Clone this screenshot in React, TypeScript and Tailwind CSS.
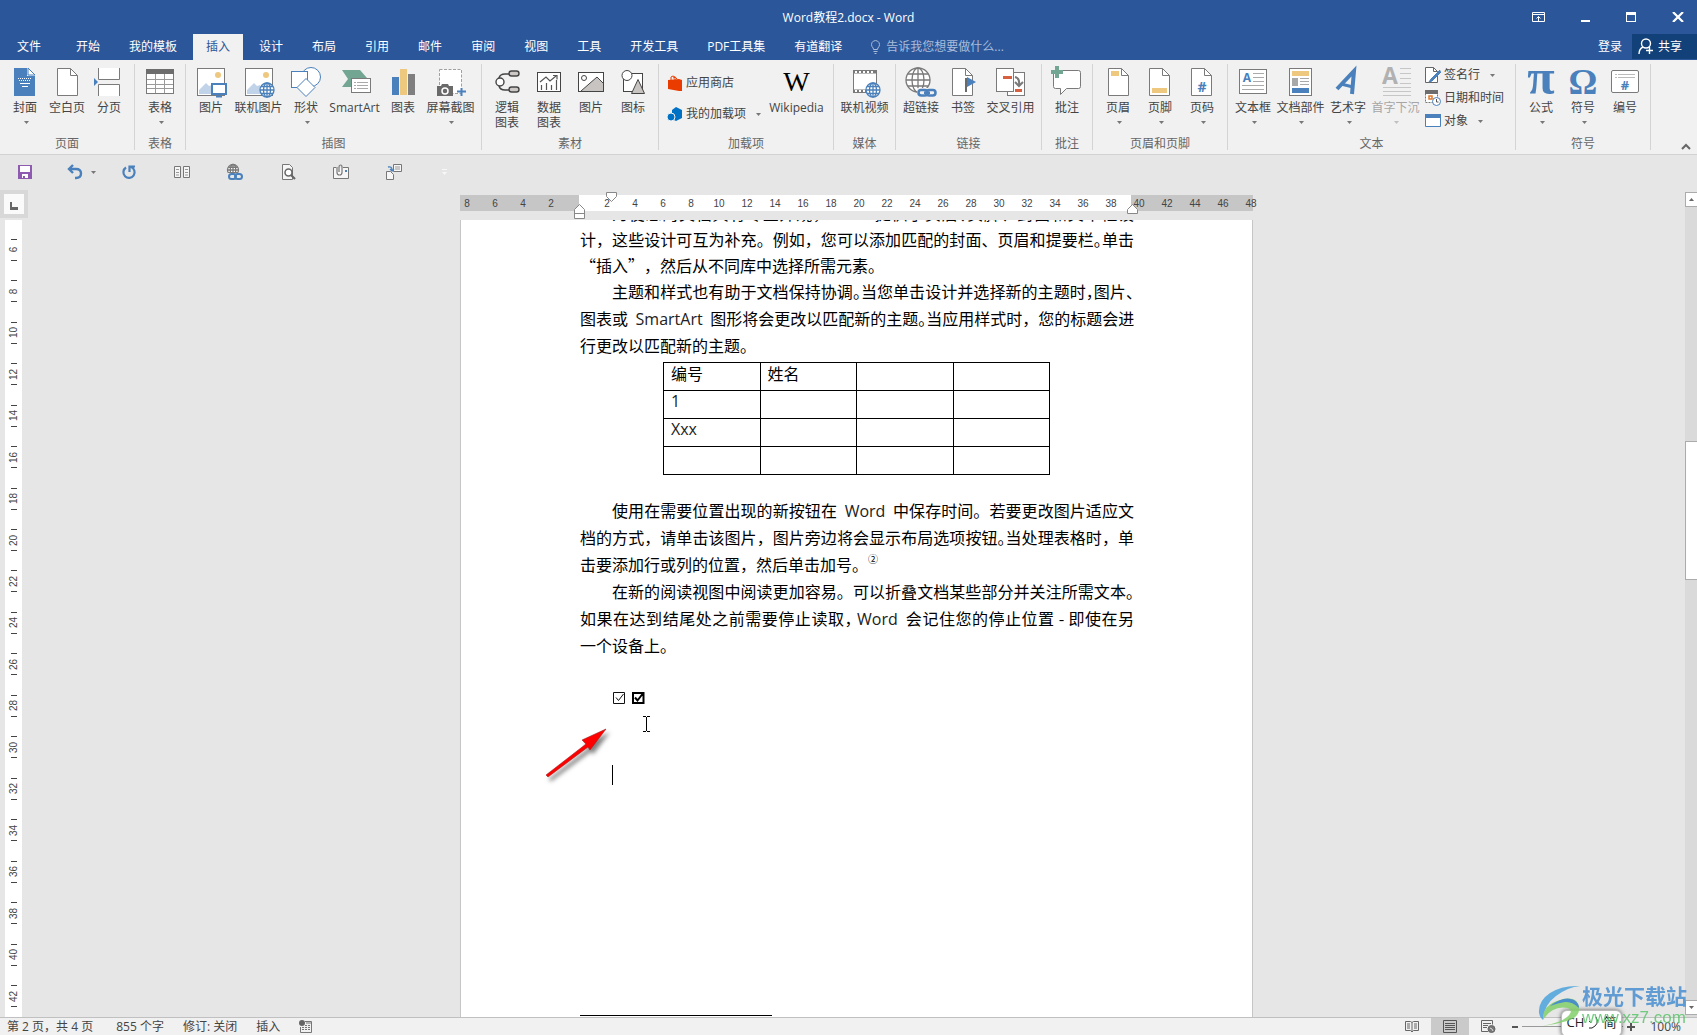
import type { ReactNode } from "react"

type RibbonItem = {
    label: string
    icon: ReactNode
    wide?: string
    menu?: boolean
    disabled?: boolean
}

const BLUE = "#4a80bb"
const GREY = "#7a7a7a"
const YELLOW = "#edc87e"
const GREEN = "#72a693"
const RED = "#d6603f"

const Caret = ({ className = "" }: { className?: string }) => (
    <svg width="5" height="3" viewBox="0 0 5 3" className={className} aria-hidden="true">
        <path d="M0 0h5L2.500 3z" fill="currentColor" />
    </svg>
)

const Icon = ({ children, size = 32 }: { children: ReactNode, size?: number }) => (
    <svg width={size} height={size} viewBox={`0 0 ${size} ${size}`} fill="none" aria-hidden="true" className="shrink-0 overflow-visible">
        {children}
    </svg>
)

// Blank sheet with a folded corner, shared by several ribbon icons
const Sheet = ({ x = 5 }: { x?: number }) => (
    <g stroke={GREY} transform={`translate(${x} 2)`}>
        <path d="M.5.5h13l7 7v20H.5z" fill="#fff" />
        <path d="M13.500.5v7h7" />
    </g>
)

const Globe = ({ cx, cy, r, color }: { cx: number, cy: number, r: number, color: string }) => (
    <g stroke={color} strokeWidth="1.300">
        <circle cx={cx} cy={cy} r={r} fill="#fff" />
        <ellipse cx={cx} cy={cy} rx={r * 0.5} ry={r} />
        <path d={`M${cx - r} ${cy}h${r * 2}M${cx} ${cy - r}v${r * 2}M${cx - r * 0.85} ${cy - r * 0.5}h${r * 1.7}M${cx - r * 0.85} ${cy + r * 0.5}h${r * 1.7}`} />
    </g>
)

const Picture = () => (
    <>
        <rect x="2.500" y="2.500" width="27" height="27" fill="#fff" stroke={GREY} />
        <circle cx="23" cy="9" r="3" fill={YELLOW} />
        <path d="M4 28V24l7-7 3 3 3-1v9z" fill="#c0d3e8" />
    </>
)

const Chain = ({ x, y }: { x: number, y: number }) => (
    <g transform={`translate(${x} ${y})`} stroke={BLUE} strokeWidth="2.600">
        <rect x="1.500" y="2" width="9" height="5.500" rx="2.700" />
        <rect x="9.500" y="2" width="9" height="5.500" rx="2.700" />
        <path d="M7 4.700h6" />
    </g>
)

const coverIcon = (
    <Icon>
        <path d="M5 2h13v8h8v20H5z" fill={BLUE} />
        <path d="M19 2l7 7h-7z" fill="#fff" stroke={BLUE} />
        <path d="M9 12.500h13M10 14.500h12" stroke="#fff" strokeDasharray="1 1" />
        <path d="M11 17.500h10M13 20.500h6" stroke="#fff" />
    </Icon>
)
const breakIcon = (
    <Icon>
        <path d="M5.500 2v11.500h21V2M5.500 30V18.500h21V30" fill="#fff" stroke={GREY} />
        <path d="M1 12l4 4-4 4z" fill={BLUE} />
    </Icon>
)
const tableIcon = (
    <Icon>
        <rect x="2.500" y="3.500" width="27" height="24" fill="#fff" stroke={GREY} />
        <path d="M2 3h28v5H2z" fill="#6d6d6d" />
        <path d="M11.500 8v19M20.500 8v19M3 13.500h26M3 18.500h26M3 22.500h26" stroke="#9a9a9a" />
    </Icon>
)
const pictureIcon = (
    <Icon>
        <Picture />
        <rect x="17" y="18" width="14" height="10" fill="#fff" stroke={BLUE} strokeWidth="2" />
        <path d="M21 30.500h6" stroke={BLUE} strokeWidth="2" />
    </Icon>
)
const onlinePictureIcon = (
    <Icon>
        <Picture />
        <Globe cx={24} cy={24} r={7} color={BLUE} />
    </Icon>
)
const shapesIcon = (
    <Icon>
        <circle cx="21" cy="11" r="9.500" fill="#fff" stroke={BLUE} />
        <rect x="1.500" y="5.500" width="16" height="16" fill="#fff" stroke={BLUE} />
        <path d="M16 12.500l9 9-9 9-9-9z" fill="#fff" stroke={BLUE} />
    </Icon>
)
const smartArtIcon = (
    <Icon>
        <path d="M3 4h18l7 8H12v9H3l6-8z" fill={GREEN} />
        <rect x="12.500" y="12.500" width="19" height="14" fill="#fff" stroke={GREY} />
        <path d="M15 16.500h2M18 16.500h11M15 19.500h2M18 19.500h11M15 22.500h2M18 22.500h11" stroke="#aaa" />
    </Icon>
)
const chartIcon = (
    <Icon>
        <path d="M5 11h7v18H5z" fill={BLUE} />
        <path d="M13 3h7v26h-7z" fill={YELLOW} />
        <path d="M21 8h7v21h-7z" fill="#7f7f7f" />
    </Icon>
)
const screenshotIcon = (
    <Icon>
        <rect x="4.500" y="3.500" width="22" height="24" fill="#fff" stroke="#a0a0a0" strokeDasharray="3 1.500" />
        <path d="M2 20h4l1-2h6l1 2h4v10H2z" fill="#6a6a6a" />
        <circle cx="10" cy="25" r="3" stroke="#fff" strokeWidth="1.500" />
        <path d="M26.500 22v8M22 25.500h9" stroke={BLUE} strokeWidth="2" />
    </Icon>
)
const logicIcon = (
    <Icon>
        <g stroke="#444" strokeWidth="1.400">
            <path d="M8 12q1-4 6-4h4M8 20q1 4 6 4h4" />
            <circle cx="9" cy="16" r="4" fill="#fff" />
            <rect x="18" y="5" width="10" height="5" rx="2.500" fill="#ccc8c6" />
            <rect x="18" y="21" width="10" height="5" rx="2.500" fill="#ccc8c6" />
        </g>
    </Icon>
)
const dataIcon = (
    <Icon>
        <rect x="4.500" y="6.500" width="23" height="19" fill="#fff" stroke="#444" />
        <path d="M8.500 19v5M13.500 17v7M18.500 19v5M23.500 14v10M7 16l6-5 4 4 6-5M20 9.500h4v4" stroke="#555" strokeWidth="1.200" />
    </Icon>
)
const photoIcon = (
    <Icon>
        <rect x="3.500" y="6.500" width="25" height="19" fill="#fff" stroke="#444" />
        <path d="M6 25L22 11l6 6v8z" fill="#c8c4c2" />
        <path d="M6 25L22 11l6 6" stroke="#444" />
        <circle cx="9" cy="12" r="2.500" stroke="#444" />
    </Icon>
)
const glyphIcon = (
    <Icon>
        <rect x="6.500" y="7.500" width="19" height="18" fill="#fff" stroke="#444" />
        <circle cx="10" cy="9.500" r="5" fill="#fff" stroke="#444" />
        <path d="M21 13.500l6.500 14h-13z" fill="#c8c4c2" stroke="#444" />
    </Icon>
)
const wikiIcon = (
    <span className="flex h-8 items-center font-['Liberation_Serif',serif] text-[28px] leading-8 text-black">W</span>
)
const videoIcon = (
    <Icon>
        <rect x="4.500" y="4.500" width="23" height="22" fill="#fff" stroke={GREY} />
        <path d="M5 6h22M5 25h22" stroke={GREY} strokeWidth="3" />
        <path d="M6 6h20M6 25h20" stroke="#fff" strokeWidth="2" strokeDasharray="2 2" />
        <Globe cx={24} cy={24} r={7} color={BLUE} />
    </Icon>
)
const linkIcon = (
    <Icon>
        <Globe cx={13} cy={14} r={12} color={GREY} />
        <path d="M12 22h20v10H12z" fill="#f1f1f1" />
        <Chain x={12} y={22} />
    </Icon>
)
const bookmarkIcon = (
    <Icon>
        <Sheet />
        <path d="M18 12h2v14h-2z" fill="#6a6a6a" />
        <path d="M20 11l9 5-9 5z" fill={BLUE} />
    </Icon>
)
const crossRefIcon = (
    <Icon>
        <rect x="12.500" y="6.500" width="17" height="23" fill="#fff" stroke={GREY} />
        <rect x="1.500" y="2.500" width="17" height="23" fill="#fff" stroke={GREY} />
        <path d="M8 10h9v3H8zM20 23h7v3h-7z" fill={RED} />
        <path d="M20 11q5 1 4 8M20 16l4 4 4-4" stroke={GREY} strokeWidth="2" />
    </Icon>
)
const commentIcon = (
    <Icon>
        <path d="M4.500 4.500h23q2 0 2 2v14q0 2-2 2h-12l-6 6v-6h-5q-2 0-2-2v-14q0-2 2-2z" fill="#fff" stroke={GREY} />
        <path d="M4 0h4v4h4v4H8v4H4V8H0V4h4z" fill={GREEN} />
    </Icon>
)
const headerIcon = (
    <Icon><Sheet x={6} /><path d="M9 5h8v5H9z" fill={YELLOW} /></Icon>
)
const footerIcon = (
    <Icon><Sheet /><path d="M8 22h15v5H8z" fill={YELLOW} /></Icon>
)
const pageNumIcon = (
    <Icon>
        <Sheet />
        <text x="16" y="26" textAnchor="middle" fontSize="14" fontWeight="700" fill={BLUE}>#</text>
    </Icon>
)
const textBoxIcon = (
    <Icon>
        <rect x="2.500" y="3.500" width="27" height="24" fill="#fff" stroke={GREY} />
        <text x="10" y="16" textAnchor="middle" fontSize="12" fontWeight="700" fill={BLUE}>A</text>
        <path d="M16 7.500h11M16 11.500h11M16 15.500h11M5 19.500h22M5 23.500h22" stroke="#aaa" />
    </Icon>
)
const partsIcon = (
    <Icon>
        <rect x="4.500" y="2.500" width="22" height="27" fill="#fff" stroke={GREY} />
        <path d="M7 5h17v5H7z" fill={YELLOW} />
        <path d="M7 12h6v8H7z" fill="#a9a9a9" />
        <path d="M15 12.500h9M15 15.500h9M15 18.500h9" stroke="#aaa" />
        <path d="M7 22h17v5H7z" fill={BLUE} />
    </Icon>
)
const wordArtIcon = (
    <Icon>
        <g stroke={BLUE} strokeWidth="4">
            <path d="M5 23L22 5l-2 23" />
            <path d="M9 18l12 3" strokeWidth="3" />
        </g>
    </Icon>
)
const dropCapIcon = (
    <Icon>
        <text x="10" y="18" textAnchor="middle" fontSize="23" fontWeight="700" fill="#b1b1b1">A</text>
        <path d="M20 2.500h11M20 7.500h11M20 12.500h11M20 17.500h11M3 21.500h28M3 25.500h28M3 29.500h28" stroke="#c6c6c6" />
    </Icon>
)
const piIcon = (
    <Icon>
        <text x="16" y="28" textAnchor="middle" fontSize="50" fontWeight="700" fontFamily="Liberation Serif, serif" fill={BLUE}>π</text>
    </Icon>
)
const omegaIcon = (
    <Icon>
        <text x="16" y="28" textAnchor="middle" fontSize="36" fontWeight="700" fontFamily="Liberation Serif, serif" fill={BLUE}>Ω</text>
    </Icon>
)
const numberIcon = (
    <Icon>
        <rect x="2.500" y="4.500" width="27" height="22" rx="1.500" fill="#fff" stroke={GREY} />
        <path d="M6 8.500h2M9 8.500h17M6 11.500h2M9 11.500h17" stroke="#bbb" />
        <text x="16" y="24" textAnchor="middle" fontSize="13" fontWeight="700" fill={BLUE}>#</text>
    </Icon>
)

const RibbonButton = ({ label, icon, wide = "w-[42px]", menu, disabled }: RibbonItem) => (
    <button type="button" disabled={disabled} className={`flex shrink-0 flex-col items-center ${wide} ${disabled ? "text-[#a6a6a6]" : "text-[#444]"}`}>
        {icon}
        <span className="mt-0.5 whitespace-pre text-center text-xs leading-[15px]">{label}</span>
        {menu && <Caret className={`ml-0.5 mt-[6px] ${disabled ? "text-[#c0c0c0]" : "text-[#777]"}`} />}
    </button>
)

const Group = ({ name, children }: { name: string, children: ReactNode }) => (
    <section aria-label={name} className="flex shrink-0 items-stretch border-r border-[#d4d4d4] px-1">
        <div className="flex flex-col">
            <div className="flex flex-1 pt-0.5">{children}</div>
            <div className="text-center text-xs leading-[12px] text-[#666]">{name}</div>
        </div>
    </section>
)

const SmallButton = ({ label, icon, menu }: RibbonItem) => (
    <button type="button" className="flex items-center gap-[3px] whitespace-nowrap text-xs leading-4 text-[#444]">
        {icon}
        <span>{label}</span>
        {menu && <Caret className="ml-[7px] text-[#777]" />}
    </button>
)

const storeIcon = (
    <Icon size={16}>
        <path d="M1 5l11-1 3 1v11l-3 0L1 14z" fill="#eb3c00" />
        <path d="M4 6V2q2-2 4 0v3M6 3q3-2 4 1" stroke="#eb3c00" />
    </Icon>
)
const addinIcon = (
    <Icon size={16}>
        <path d="M9 1l6 3v8l-6 3-4-2V4z" fill="#0072c6" />
        <circle cx="4" cy="11" r="4" fill="#0072c6" stroke="#f1f1f1" />
    </Icon>
)
const signIcon = (
    <Icon size={16}>
        <path d="M.5.5h8l4 4v11H.5z" fill="#fff" stroke="#666" />
        <path d="M8.500.5v4h4" stroke="#666" />
        <path d="M15 3l-9 9-2 3 3-1 9-9" fill={BLUE} stroke={BLUE} />
    </Icon>
)
const dateIcon = (
    <Icon size={16}>
        <path d="M.5 1.500h12v11H.5z" fill="#fff" stroke="#777" strokeDasharray="2 1" />
        <path d="M0 0h13v4H0z" fill="#6d6d6d" />
        <path d="M4 6h3v3H4z" stroke="#e07b2c" strokeWidth="1.500" />
        <circle cx="11.500" cy="11.500" r="4" fill="#fff" stroke={BLUE} />
        <path d="M11.500 9v3h2" stroke="#555" />
    </Icon>
)
const objectIcon = (
    <Icon size={16}>
        <path d="M.5 1.500h15v12H.5z" fill="#fff" stroke={BLUE} />
        <path d="M0 1h16v4H0z" fill={BLUE} />
    </Icon>
)

const tabs = ["开始", "我的模板", "插入", "设计", "布局", "引用", "邮件", "审阅", "视图", "工具", "开发工具", "PDF工具集", "有道翻译"]

function TitleBar() {
    return (
        <header className="bg-[#2b579a] text-xs text-white">
            <div className="grid h-[34px] grid-cols-3 items-center">
                <div />
                <h1 className="pt-0.5 text-center">Word教程2.docx - Word</h1>
                <div className="flex items-center justify-end gap-9 pr-[13px]">
                    <button type="button" aria-label="功能区显示选项">
                        <svg width="13" height="10" fill="none" stroke="#fff"><path d="M.5.5h12v9H.5zM.5 2.500h12M6.500 9V4.500M4.500 6.500l2-2 2 2" /></svg>
                    </button>
                    <button type="button" aria-label="最小化" className="flex h-[10px] w-[9px] items-end">
                        <span className="h-0.5 w-full bg-white" />
                    </button>
                    <button type="button" aria-label="最大化" className="h-[10px] w-[10px] border border-t-[3px] border-white" />
                    <button type="button" aria-label="关闭">
                        <svg width="12" height="10" stroke="#fff" strokeWidth="2.200"><path d="M1 0l10 10M11 0L1 10" /></svg>
                    </button>
                </div>
            </div>
            <nav className="flex h-[26px] items-stretch gap-[3px] whitespace-nowrap">
                <button type="button" className="mr-0.5 px-[17px] pb-px">文件</button>
                {tabs.map(tab => (
                    <button key={tab} type="button" className={tab === "插入" ? "bg-[#f1f1f1] px-[13px] pb-px text-[#2b579a]" : "px-[13px] pb-px"}>{tab}</button>
                ))}
                <label className="ml-3 flex items-center gap-[5px]">
                    <svg width="11" height="14" fill="none" stroke="#a9bcdb" aria-hidden="true">
                        <path d="M3.500 9.500q0-1.500-1.500-3a4 4 0 1 1 7 0q-1.500 1.500-1.500 3zM3.500 11.500h4M4.500 13.500h2" />
                    </svg>
                    <input aria-label="告诉我您想要做什么" placeholder="告诉我您想要做什么..." className="w-[140px] bg-transparent outline-none placeholder:text-[#a9bcdb]" />
                </label>
                <div className="flex-1" />
                <button type="button" className="px-[7px] pb-px">登录</button>
                <button type="button" className="mb-px flex items-center gap-1 bg-[#124078] pl-[6px] pr-[15px]">
                    <svg width="16" height="17" fill="none" stroke="#fff" strokeWidth="1.400" aria-hidden="true">
                        <circle cx="8" cy="5.500" r="4.500" />
                        <path d="M1 16q0-5 4-7M11.500 9v7M8 12.500h7" />
                    </svg>
                    共享
                </button>
            </nav>
        </header>
    )
}

function Ribbon() {
    return (
        <div className="flex h-[95px] items-stretch border-b border-[#d2d2d2] bg-[#f1f1f1] py-1">
            <Group name="页面">
                <RibbonButton label="封面" icon={coverIcon} menu />
                <RibbonButton label="空白页" icon={<Icon><Sheet x={6} /></Icon>} />
                <RibbonButton label="分页" icon={breakIcon} />
            </Group>
            <Group name="表格">
                <RibbonButton label="表格" icon={tableIcon} menu />
            </Group>
            <Group name="插图">
                <RibbonButton label="图片" icon={pictureIcon} />
                <RibbonButton label="联机图片" icon={onlinePictureIcon} wide="w-[53px]" />
                <RibbonButton label="形状" icon={shapesIcon} menu />
                <RibbonButton label="SmartArt" icon={smartArtIcon} wide="w-[55px]" />
                <RibbonButton label="图表" icon={chartIcon} />
                <RibbonButton label="屏幕截图" icon={screenshotIcon} wide="w-[53px]" menu />
            </Group>
            <Group name="素材">
                <RibbonButton label={"逻辑\n图表"} icon={logicIcon} />
                <RibbonButton label={"数据\n图表"} icon={dataIcon} />
                <RibbonButton label="图片" icon={photoIcon} />
                <RibbonButton label="图标" icon={glyphIcon} />
            </Group>
            <Group name="加载项">
                <div className="flex w-[101px] flex-col gap-[15px] pl-1 pt-[9px]">
                    <SmallButton label="应用商店" icon={storeIcon} />
                    <SmallButton label="我的加载项" icon={addinIcon} menu />
                </div>
                <RibbonButton label="Wikipedia" icon={wikiIcon} wide="w-[65px]" />
            </Group>
            <Group name="媒体">
                <RibbonButton label="联机视频" icon={videoIcon} wide="w-[53px]" />
            </Group>
            <Group name="链接">
                <RibbonButton label="超链接" icon={linkIcon} />
                <RibbonButton label="书签" icon={bookmarkIcon} />
                <RibbonButton label="交叉引用" icon={crossRefIcon} wide="w-[53px]" />
            </Group>
            <Group name="批注">
                <RibbonButton label="批注" icon={commentIcon} />
            </Group>
            <Group name="页眉和页脚">
                <RibbonButton label="页眉" icon={headerIcon} menu />
                <RibbonButton label="页脚" icon={footerIcon} menu />
                <RibbonButton label="页码" icon={pageNumIcon} menu />
            </Group>
            <Group name="文本">
                <RibbonButton label="文本框" icon={textBoxIcon} menu />
                <RibbonButton label="文档部件" icon={partsIcon} wide="w-[53px]" menu />
                <RibbonButton label="艺术字" icon={wordArtIcon} menu />
                <RibbonButton label="首字下沉" icon={dropCapIcon} wide="w-[53px]" menu disabled />
                <div className="flex w-[89px] flex-col gap-[7px] pl-[3px] pt-px">
                    <SmallButton label="签名行" icon={signIcon} menu />
                    <SmallButton label="日期和时间" icon={dateIcon} />
                    <SmallButton label="对象" icon={objectIcon} menu />
                </div>
            </Group>
            <Group name="符号">
                <RibbonButton label="公式" icon={piIcon} menu />
                <RibbonButton label="符号" icon={omegaIcon} menu />
                <RibbonButton label="编号" icon={numberIcon} />
            </Group>
            <button type="button" aria-label="折叠功能区" className="ml-auto self-end pr-1.5">
                <svg width="10" height="7" fill="none" stroke="#666" strokeWidth="2"><path d="M1 6l4-4 4 4" /></svg>
            </button>
        </div>
    )
}

function QuickAccess() {
    return (
        <div className="flex h-[35px] items-center gap-[37px] pb-px pl-[17px]">
            <button type="button" aria-label="保存">
                <Icon size={16}>
                    <path d="M1 1h14v14H1z" fill="#8e5bb0" />
                    <path d="M3 2h10v6H3zM5 10h6v4H8v-2H6v2H5z" fill="#fff" />
                </Icon>
            </button>
            <div className="-ml-[3px] -mr-3 flex items-center gap-2">
                <button type="button" aria-label="撤消">
                    <Icon size={16}>
                        <path d="M6 1L2 5l4 4M2 5h7q5 0 5 4.500T9 14H8" stroke={BLUE} strokeWidth="2.400" />
                    </Icon>
                </button>
                <Caret className="text-[#777]" />
            </div>
            <button type="button" aria-label="重复">
                <Icon size={16}>
                    <path d="M10 3a5.600 5.600 0 1 1-5 .5M8.500 8V2.500H14" stroke={BLUE} strokeWidth="2.200" />
                </Icon>
            </button>
            <button type="button" aria-label="并排查看">
                <Icon size={16}>
                    <path d="M.5 2.500h6v11h-6zM9.500 2.500h6v11h-6z" fill="#f6f6f6" stroke="#777" />
                    <path d="M2 5.500h3M2 8.500h3M2 11h3M11 5.500h3M11 8.500h3M11 11h3" stroke="#999" />
                </Icon>
            </button>
            <button type="button" aria-label="超链接">
                <Icon size={16}>
                    <Globe cx={6} cy={6} r={5.5} color={GREY} />
                    <path d="M1 9h15v7H1z" fill="#e6e6e6" />
                    <g stroke={BLUE} strokeWidth="2"><rect x="2" y="10" width="7" height="5" rx="2.500" /><rect x="8" y="10" width="7" height="5" rx="2.500" /></g>
                </Icon>
            </button>
            <button type="button" aria-label="打印预览">
                <Icon size={16}>
                    <path d="M2.500.5h7l3 3v12h-10z" fill="#f6f6f6" stroke="#777" />
                    <circle cx="8.500" cy="8.500" r="3.500" fill="#fff" stroke="#666" strokeWidth="1.500" />
                    <path d="M11 11l4 4" stroke="#666" strokeWidth="2.200" />
                </Icon>
            </button>
            <button type="button" aria-label="附件">
                <Icon size={16}>
                    <path d="M3 3.500H.5v11h15v-11H10" fill="#f6f6f6" stroke="#777" />
                    <path d="M4 3v5.500Q4 11 6.500 11T9 8.500V3q0-2-1.500-2T6 3v5" stroke="#777" strokeWidth="1.200" />
                    <path d="M12 6h2v2h-2z" fill={BLUE} />
                </Icon>
            </button>
            <button type="button" aria-label="转换">
                <Icon size={16}>
                    <path d="M7.500.5h8v7h-8z" fill="#f6f6f6" stroke="#777" />
                    <path d="M9 3h5M9 5h5" stroke="#999" />
                    <path d="M.5 7.500h4l3 3v5h-7z" fill="#f6f6f6" stroke="#777" />
                    <path d="M2 3q4-1 4 3M4 5l2 2 2-2" stroke={BLUE} strokeWidth="1.300" />
                </Icon>
            </button>
            <button type="button" aria-label="自定义快速访问工具栏" className="ml-[3px] flex flex-col items-center gap-0.5 text-[#f8f8f8]">
                <span className="h-px w-[5px] bg-current" />
                <Caret />
            </button>
        </div>
    )
}

const evens = (from: number, to: number) => Array.from({ length: (to - from) / 2 + 1 }, (_, i) => from + i * 2)

const RulerMarks = ({ marks }: { marks: number[] }) => (
    <>
        {marks.map(n => <span key={n} className="w-7 shrink-0 text-center">{n}</span>)}
    </>
)

function HorizontalRuler() {
    return (
        <div className="relative flex h-[30px] w-[793px] shrink-0 pt-[5px] font-['Liberation_Sans',sans-serif] text-[10px] leading-[17px] text-[#444]">
            <div className="flex h-4 w-[119px] shrink-0 justify-end bg-[#c6c6c6] pr-[14px]">
                <RulerMarks marks={[8, 6, 4, 2]} />
            </div>
            <div className="flex h-4 w-[552px] shrink-0 bg-white pl-[14px]">
                <RulerMarks marks={evens(2, 38)} />
            </div>
            <div className="h-4 min-w-0 flex-1 bg-[#c6c6c6]">
                <div className="-ml-1.5 flex">
                    <RulerMarks marks={evens(40, 48)} />
                </div>
            </div>
            <svg className="absolute left-[146px] top-0.5" width="11" height="11" fill="#fff" stroke="#888" aria-hidden="true">
                <path d="M.5.5h10v4l-5 5-5-5z" />
            </svg>
            <svg className="absolute left-[114px] top-[14px]" width="11" height="16" fill="#fff" stroke="#888" aria-hidden="true">
                <path d="M5.500.5l5 5v9H.5v-9zM.5 9.500h10" />
            </svg>
            <svg className="absolute left-[667px] top-[14px]" width="11" height="10" fill="#fff" stroke="#888" aria-hidden="true">
                <path d="M5.500.5l5 5v4H.5v-4z" />
            </svg>
        </div>
    )
}

function Gutter() {
    return (
        <div className="flex w-7 shrink-0 flex-col">
            <button type="button" aria-label="制表符" className="mb-0.5 flex h-7 w-7 items-center justify-center border-4 border-[#d8d8d8] bg-[#fafafa]">
                <span className="mt-1 h-2 w-2 border-b-[3px] border-l-2 border-[#666]" />
            </button>
            <div className="ml-[5px] flex w-[17px] flex-1 flex-col bg-white pt-[9px] font-['Liberation_Sans',sans-serif] text-[10px] text-[#444]">
                {evens(6, 42).map(n => (
                    <div key={n} className="flex flex-1 items-center justify-center">
                        <div className="flex h-[22px] w-[6px] items-center justify-center border-y border-[#444]">
                            <span className="-rotate-90">{n}</span>
                        </div>
                    </div>
                ))}
            </div>
        </div>
    )
}

// Latin words keep their own face inside the Chinese body text
const En = ({ children }: { children: ReactNode }) => (
    <span className="px-1 font-['Open_Sans',sans-serif] leading-none text-[#222]">{children}</span>
)

// Punctuation set at half width
const Half = ({ children }: { children: ReactNode }) => (
    <span className="[font-feature-settings:'halt']">{children}</span>
)

const Line = ({ children, first, last }: { children: ReactNode, first?: boolean, last?: boolean }) => (
    <span className={`block whitespace-nowrap [text-spacing-trim:space-all] ${first ? "pl-8" : ""} ${last ? "" : "[text-align-last:justify]"}`}>{children}</span>
)

const rows = [
    ["编号", "姓名", "", ""],
    ["1", "", "", ""],
    ["Xxx", "", "", ""],
    ["", "", "", ""],
]

function Page() {
    return (
        <article className="relative flex min-h-0 w-[793px] flex-1 flex-col overflow-hidden border-x border-[#c6c6c6] bg-white pl-[119px] pr-[118px] font-['Noto_Sans_CJK_SC',sans-serif] text-base text-black">
            <p className="-mt-5 leading-[26px]">
                <Line first>为使您的文档具有专业外观<Half>，</Half><En>Word</En> 提供了页眉<Half>、</Half>页脚、封面和文本框设</Line>
                <Line>计，这些设计可互为补充。例如，您可以添加匹配的封面、页眉和提要栏<Half>。</Half>单击</Line>
                <Line last>“插入”，然后从不同库中选择所需元素。</Line>
            </p>
            <p className="leading-[27px]">
                <Line first>主题和样式也有助于文档保持协调<Half>。</Half>当您单击设计并选择新的主题时<Half>，</Half>图片<Half>、</Half></Line>
                <Line>图表或 <En>SmartArt</En> 图形将会更改以匹配新的主题<Half>。</Half>当应用样式时，您的标题会进</Line>
                <Line last>行更改以匹配新的主题。</Line>
            </p>
            <table className="ml-[83px] mt-[3px] w-[387px] shrink-0 table-fixed border-collapse">
                <tbody>
                    {rows.map((row, i) => (
                        <tr key={i} className="h-7">
                            {row.map((cell, j) => (
                                <td key={j} className={`border border-black px-[7px] py-0 align-top leading-5 ${i === 0 ? "" : "font-['Open_Sans',sans-serif] text-[#222]"}`}>{cell}</td>
                            ))}
                        </tr>
                    ))}
                </tbody>
            </table>
            <div className="mt-[22px] leading-[27px]">
                <p>
                    <Line first>使用在需要位置出现的新按钮在 <En>Word</En> 中保存时间。若要更改图片适应文</Line>
                    <Line>档的方式，请单击该图片，图片旁边将会显示布局选项按钮<Half>。</Half>当处理表格时，单</Line>
                    <Line last>击要添加行或列的位置，然后单击加号。<sup className="-top-2 text-[10px]">②</sup></Line>
                </p>
                <p>
                    <Line first>在新的阅读视图中阅读更加容易。可以折叠文档某些部分并关注所需文本<Half>。</Half></Line>
                    <Line>如果在达到结尾处之前需要停止读取<Half>，</Half><En>Word</En> 会记住您的停止位置 - 即使在另</Line>
                    <Line last>一个设备上。</Line>
                </p>
            </div>
            <div className="ml-[33px] mt-[33px] flex gap-[6px]">
                <svg width="13" height="13" fill="none" stroke="#111" role="img" aria-label="☑">
                    <path d="M.5.5h11v11H.5zM3 5.500l2.500 3 5-6.500" />
                </svg>
                <svg width="13" height="13" fill="none" stroke="#000" strokeWidth="2" role="img" aria-label="☑">
                    <path d="M1 1h10.500v10H1zM3 5.500l2.500 3 5-6.500" />
                </svg>
            </div>
            <div className="ml-8 mt-[60px] h-5 w-px shrink-0 bg-black" />
            <div className="mb-px mt-auto h-px w-48 shrink-0 bg-black" />
            <svg className="absolute left-[80px] top-[504px]" width="75" height="65" aria-hidden="true">
                <g className="drop-shadow-[3px_4px_2px_rgba(0,0,0,0.5)]">
                    <path d="M5 51L45 20l-4-4 24-11-16 21-2-3L7 53z" fill="#f00" stroke="#a02020" strokeWidth=".6" />
                </g>
            </svg>
            <svg className="absolute left-[182px] top-[496px]" width="7" height="16" fill="none" stroke="#000" aria-hidden="true">
                <path d="M0 .5h3M4 .5h3M3.500 1v14M0 15.500h3M4 15.500h3" />
            </svg>
        </article>
    )
}

function ScrollBar() {
    return (
        <div className="mt-0.5 flex w-3 shrink-0 flex-col bg-[#dadada]">
            <button type="button" aria-label="向上滚动" className="flex h-[15px] items-center justify-center border border-r-0 border-[#ababab] bg-white">
                <Caret className="rotate-180 text-[#666]" />
            </button>
            <div className="flex-[235]" />
            <div className="flex-[138] border border-r-0 border-[#ababab] bg-white" />
            <div className="flex-[422]" />
            <button type="button" aria-label="向下滚动" className="mb-0.5 flex h-[15px] items-center justify-center border border-r-0 border-[#ababab] bg-white">
                <Caret className="text-[#666]" />
            </button>
        </div>
    )
}

function StatusBar() {
    return (
        <footer className="flex h-[18px] shrink-0 items-center border-t border-[#c0c0c0] bg-[#f1f1f1] text-xs leading-4 text-[#444]">
            <div className="flex items-center gap-[19px] whitespace-nowrap pl-[7px]">
                <span className="pr-1">第 2 页，共 4 页</span>
                <span>855 个字</span>
                <span>修订: 关闭</span>
                <span>插入</span>
                <svg width="13" height="13" fill="none" stroke="#777" aria-hidden="true">
                    <circle cx="3" cy="3" r="3" fill="#666" stroke="none" />
                    <path d="M6 1.500h6.500v11h-11V7M7 3h6" />
                    <path d="M3 7.500h8M3 9.500h8M6 5.500h5" strokeDasharray="2 1" />
                </svg>
            </div>
            <div className="ml-auto flex h-full items-center pr-4">
                <button type="button" aria-label="阅读视图" className="px-3">
                    <svg width="14" height="13" fill="none" stroke="#666"><path d="M.5 1.500h5l1.500 1 1.500-1h5v9h-5l-1.500 1.500-1.500-1.500h-5zM7 2.500V12M2 4h3M2 6h3M2 8h3M9 4h3M9 6h3M9 8h3" /></svg>
                </button>
                <button type="button" aria-label="页面视图" className="flex h-full items-center bg-[#cacaca] px-3">
                    <svg width="14" height="13" fill="none" stroke="#555"><path d="M.5.5h13v12H.5zM2 3.500h10M2 5.500h10M2 7.500h10M2 9.500h10" /></svg>
                </button>
                <button type="button" aria-label="Web 版式视图" className="px-3">
                    <svg width="15" height="13" fill="none" stroke="#666"><path d="M7 11.500H.5V.5h11v4M2 3.500h8M2 5.500h5M2 7.500h4" /><circle cx="10.500" cy="9" r="3.500" fill="#777" /><path d="M9 8l2 1 1 2" stroke="#ddd" /></svg>
                </button>
                <button type="button" aria-label="缩小" className="ml-1 h-0.5 w-[6px] bg-[#555]" />
                <input type="range" aria-label="缩放" defaultValue={50} className="mx-1 h-px w-[101px] appearance-none bg-[#999] [&::-webkit-slider-thumb]:h-[11px] [&::-webkit-slider-thumb]:w-[5px] [&::-webkit-slider-thumb]:appearance-none [&::-webkit-slider-thumb]:bg-[#666]" />
                <button type="button" aria-label="放大" className="mr-[15px]">
                    <svg width="8" height="8" stroke="#555" strokeWidth="2"><path d="M4 0v8M0 4h8" /></svg>
                </button>
                <span>100%</span>
            </div>
        </footer>
    )
}

export default function App() {
    return (
        <div lang="zh-CN" className="relative flex h-screen flex-col overflow-hidden bg-[#e6e6e6] font-['Open_Sans','Noto_Sans_CJK_SC',sans-serif]">
            <TitleBar />
            <Ribbon />
            <QuickAccess />
            <main className="flex min-h-0 flex-1">
                <Gutter />
                <div className="flex min-w-0 flex-1 flex-col items-center">
                    <HorizontalRuler />
                    <Page />
                </div>
                <ScrollBar />
            </main>
            <StatusBar />

            <div className="absolute -bottom-0.5 right-[75px] flex h-[27px] w-[61px] items-center justify-center gap-1 rounded-md border border-[#bbb] bg-white pb-0.5 text-[13px] text-[#222] shadow-[0_0_4px_rgba(0,0,0,0.6)]">
                <span>CH</span>
                <svg width="11" height="12" fill="none" stroke="#222" aria-hidden="true"><path d="M8 0q4 7-4 11H1M1 4l2 2" /></svg>
                <span>简</span>
            </div>
            <div className="absolute bottom-[7px] right-[10px] flex items-center gap-px opacity-85">
                <svg width="43" height="42" viewBox="0 0 43 42" aria-hidden="true">
                    <path d="M42 1Q24 0 12 8T1 28q1 5 4 7Q6 20 18 11T42 1z" fill="#4da3dd" />
                    <path d="M5 35Q4 20 22 15t19 8q1 9-12 13T4 41q18-3 25-9t1-9Q14 20 5 35z" fill="#83cf6b" />
                    <path d="M12 21Q26 10 36 15q5 3 5 8-7-7-14-6t-15 4z" fill="#2f7fc6" />
                </svg>
                <div className="flex flex-col">
                    <span className="text-[21px] font-bold leading-6 text-[#4a8fd0]">极光下载站</span>
                    <span className="font-['Liberation_Sans',sans-serif] text-[17px] leading-5 text-[#5cc46c]">www.xz7.com</span>
                </div>
            </div>
        </div>
    )
}
